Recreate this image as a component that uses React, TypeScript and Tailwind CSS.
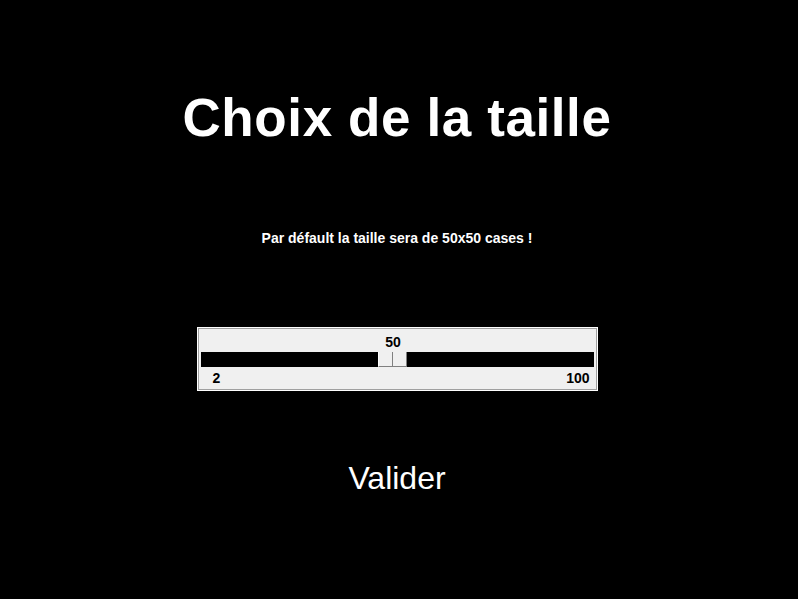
export default function App() {
  return (
    <div className="flex h-[599px] w-full flex-col items-center bg-black pr-[4px] font-['Liberation_Sans',Arial,sans-serif] text-white">
      <h1 className="mt-[86px] h-[64px] text-[53px] font-bold leading-[64px] tracking-[0.6px]">
        Choix de la taille
      </h1>

      <p className="mt-[80px] text-[14px] font-bold leading-[16px]">
        Par défault la taille sera de 50x50 cases !
      </p>

      <div className="mt-[81px] w-[401px] border border-white">
        <div className="border border-[#a0a0a0] bg-[#f0f0f0] px-[2px] text-black">
          <div className="h-[23px] pt-[5px] pr-[8px] text-center text-[14px] font-bold leading-[16px]">50</div>
          <div className="relative h-[15px] bg-black">
            <div className="absolute left-[177px] top-0 flex h-[15px] w-[29px] border-l border-r border-b border-l-white border-r-[#808080] border-b-[#808080] bg-[#f0f0f0]">
              <div className="h-full w-[14px] border-r border-[#808080]" />
              <div className="h-full flex-1" />
            </div>
          </div>
          <div className="flex h-[22px] items-center justify-between pl-[12px] pr-[4px] text-[14px] font-bold leading-[16px]">
            <span>2</span>
            <span>100</span>
          </div>
        </div>
      </div>

      <button className="mt-[69px] text-[32px] leading-[36px] text-white">Valider</button>
    </div>
  );
}
